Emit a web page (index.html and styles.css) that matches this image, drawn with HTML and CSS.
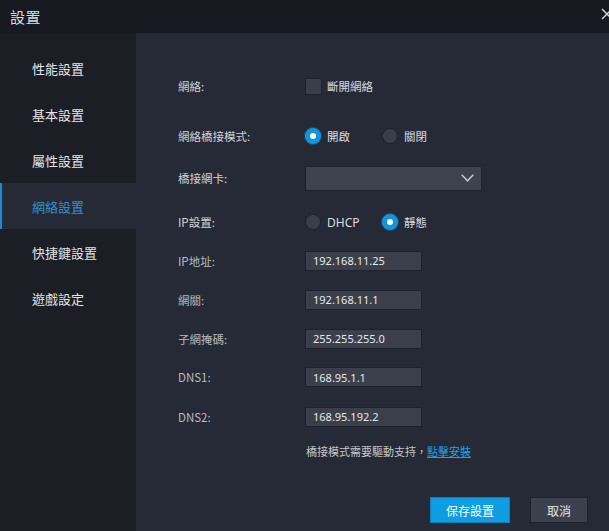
FILE: index.html
```html
<!DOCTYPE html>
<html lang="zh-Hant">
<head>
<meta charset="utf-8">
<title>設置</title>
<link rel="stylesheet" href="styles.css">
</head>
<body>
<div class="window">
  <header class="titlebar">
    <span class="title">設置</span>
    <svg class="close" width="12" height="12" viewBox="0 0 12 12"><path d="M1 1L11 11M11 1L1 11" stroke="#d8d8d8" stroke-width="1.4" fill="none"/></svg>
  </header>
  <div class="body">
    <nav class="sidebar">
      <div class="nav-item">性能設置</div>
      <div class="nav-item">基本設置</div>
      <div class="nav-item">屬性設置</div>
      <div class="nav-item active">網絡設置</div>
      <div class="nav-item">快捷鍵設置</div>
      <div class="nav-item">遊戲設定</div>
    </nav>
    <main class="content">
      <div class="form">
        <div class="label">網絡:</div>
        <div class="field"><span class="checkbox"></span><span class="opt">斷開網絡</span></div>

        <div class="label">網絡橋接模式:</div>
        <div class="field"><span class="radio on"></span><span class="opt w-radio">開啟</span><span class="radio"></span><span class="opt">關閉</span></div>

        <div class="label">橋接網卡:</div>
        <div class="field"><div class="select"><svg width="13" height="8" viewBox="0 0 13 8"><path d="M0.7 0.7L6.5 6.8L12.3 0.7" stroke="#c4c6cc" stroke-width="1.5" fill="none"/></svg></div></div>

        <div class="label">IP設置:</div>
        <div class="field"><span class="radio"></span><span class="opt w-radio latin">DHCP</span><span class="radio on"></span><span class="opt">靜態</span></div>

        <div class="label dim">IP地址:</div>
        <div class="field"><div class="input">192.168.11.25</div></div>

        <div class="label dim">網關:</div>
        <div class="field"><div class="input">192.168.11.1</div></div>

        <div class="label dim">子網掩碼:</div>
        <div class="field"><div class="input">255.255.255.0</div></div>

        <div class="label dim">DNS1:</div>
        <div class="field"><div class="input">168.95.1.1</div></div>

        <div class="label dim">DNS2:</div>
        <div class="field"><div class="input">168.95.192.2</div></div>

        <div class="label"></div>
        <div class="field note">橋接模式需要驅動支持，<a class="link" href="#">點擊安裝</a></div>
      </div>
      <div class="actions">
        <button class="btn primary">保存設置</button>
        <button class="btn">取消</button>
      </div>
    </main>
  </div>
</div>
</body>
</html>
```
FILE: styles.css
```css
* { box-sizing: border-box; }
html, body { margin: 0; padding: 0; }
body {
  width: 609px;
  height: 531px;
  overflow: hidden;
  background: #262a36;
  font-family: "Noto Sans CJK TC", "Noto Sans", sans-serif;
  color: #d6d8dc;
}
.window { display: flex; flex-direction: column; height: 531px; }
.titlebar {
  height: 33px;
  background: #171a21;
  display: flex;
  align-items: center;
  padding-left: 10px;
  position: relative;
  flex: none;
}
.title { font-size: 15px; color: #dcdde0; letter-spacing: 0.5px; }
.close { position: absolute; left: 601px; top: 8px; }
.body { flex: 1; display: flex; }
.sidebar {
  width: 136px;
  background: #1c1e25;
  padding-top: 12px;
  flex: none;
}
.nav-item {
  height: 46px;
  display: flex;
  align-items: center;
  padding-left: 30px;
  font-size: 13px;
  color: #e4e5e8;
  border-left: 2px solid transparent;
}
.nav-item.active {
  background: #262a36;
  border-left-color: #1e88d0;
  color: #2f91d6;
}
.content { flex: 1; padding: 41px 21px 0 42px; display: flex; flex-direction: column; }
.form {
  display: grid;
  grid-template-columns: 127px 1fr;
  grid-template-rows: 50px 42px 44px 38.5px 39px 39px 38.5px 39.5px 34.5px 24px;
  align-items: start;
}
.label { height: 24px; display: flex; align-items: center; font-size: 11.5px; color: #d0d2d6; }
.label.dim { color: #b7bac0; }
.field { height: 24px; display: flex; align-items: center; font-size: 11.5px; color: #d4d6da; }
.checkbox {
  width: 17px; height: 17px;
  background: #3a3e4a;
  border: 1px solid #1f222a;
  margin-right: 5px;
}
.opt { color: #dadce0; }
.latin { font-family: "Noto Sans", sans-serif; font-size: 12px; }
.w-radio { width: 55px; }
.radio {
  width: 16px; height: 16px;
  border-radius: 50%;
  background: #3a3e4a;
  border: 1px solid #1f222a;
  margin-right: 6px;
  flex: none;
}
.radio.on {
  background: #fff;
  border: 5px solid #1296db;
  box-shadow: 0 0 0 1px rgba(18,150,219,0.35);
}
.select {
  width: 177px; height: 25px;
  background: #3e4250;
  border: 1px solid #1f222a;
  display: flex; align-items: center; justify-content: flex-end;
  padding-right: 7px;
}
.input {
  width: 117px; height: 20px;
  background: #3b3f4c;
  border: 1px solid #1f222a;
  padding-left: 7px;
  font-family: "Noto Sans", sans-serif;
  font-size: 11px;
  color: #e6e7ea;
  display: flex; align-items: center;
}
.note { color: #c4c6cb; font-size: 11px; padding-left: 1px; }
.link { color: #1aa3e8; text-decoration: underline; }
.actions {
  display: flex;
  justify-content: flex-end;
  gap: 20px;
  margin-top: 34px;
}
.btn {
  height: 26px;
  width: 58px;
  border: 1px solid #1f222a;
  background: #3c404c;
  color: #e4e5e8;
  font-family: "Noto Sans CJK TC", sans-serif;
  font-size: 12px;
  padding: 0;
}
.btn.primary { width: 80px; background: #0e9ce2; border-color: #0b7fb8; color: #fff; }
```
